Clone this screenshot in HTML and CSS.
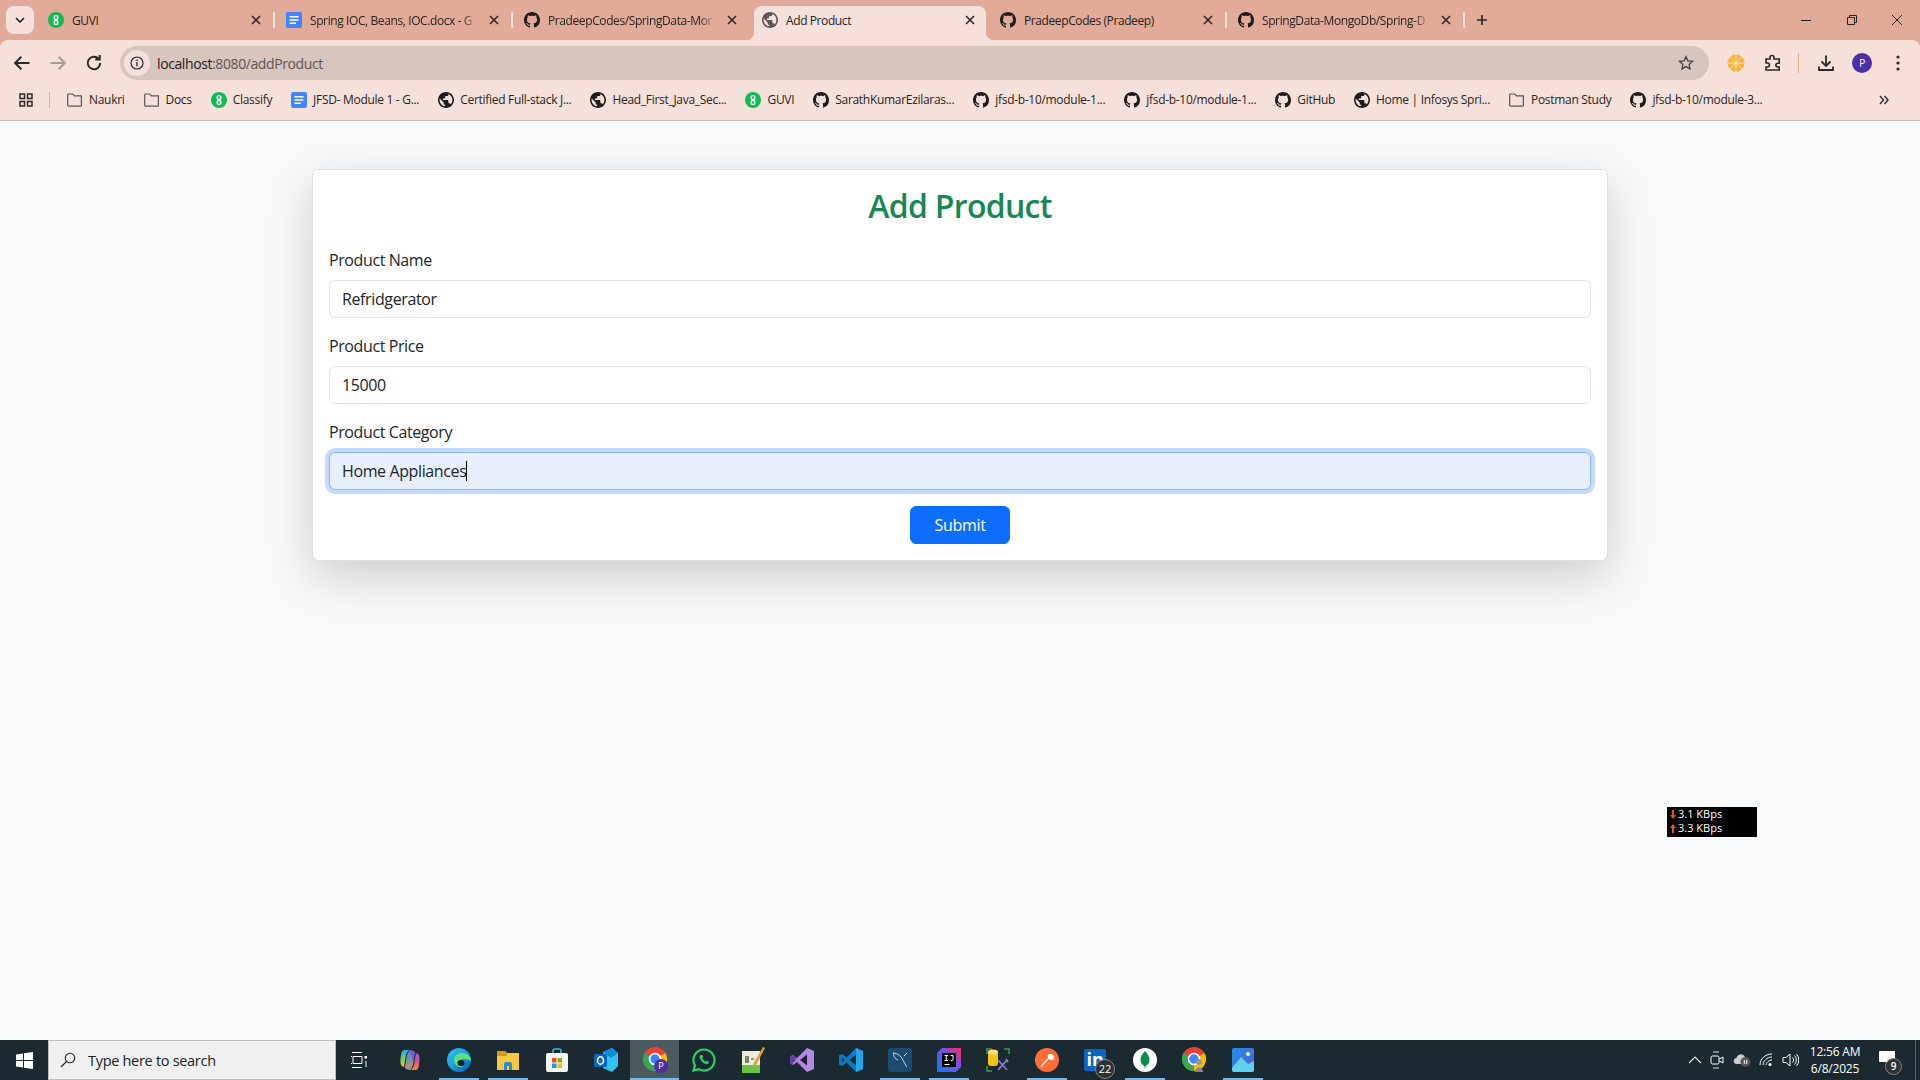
FILE: index.html
```html
<!DOCTYPE html>
<html lang="en">
<head>
    <meta charset="UTF-8">
    <title>Add Product</title>
    <link rel="stylesheet" href="styles.css">
</head>
<body>
    <!-- shared icons -->
    <svg class="sprite" aria-hidden="true">
        <symbol id="gh" viewBox="0 0 16 16"><path d="M8 0C3.58 0 0 3.58 0 8c0 3.54 2.29 6.53 5.47 7.59.4.07.55-.17.55-.38 0-.19-.01-.82-.01-1.49-2.01.37-2.53-.49-2.69-.94-.09-.23-.48-.94-.82-1.13-.28-.15-.68-.52-.01-.53.63-.01 1.08.58 1.23.82.72 1.21 1.87.87 2.33.66.07-.52.28-.87.51-1.07-1.78-.2-3.64-.89-3.64-3.95 0-.87.31-1.59.82-2.15-.08-.2-.36-1.02.08-2.12 0 0 .67-.21 2.2.82.64-.18 1.32-.27 2-.27.68 0 1.36.09 2 .27 1.53-1.04 2.2-.82 2.2-.82.44 1.1.16 1.92.08 2.12.51.56.82 1.27.82 2.15 0 3.07-1.87 3.75-3.65 3.95.29.25.54.73.54 1.48 0 1.07-.01 1.93-.01 2.2 0 .21.15.46.55.38A8.013 8.013 0 0016 8c0-4.42-3.58-8-8-8z"/></symbol>
        <symbol id="globe" viewBox="2 2 20 20"><path d="M12 2C6.48 2 2 6.48 2 12s4.48 10 10 10 10-4.48 10-10S17.52 2 12 2zm-1 17.93c-3.95-.49-7-3.85-7-7.93 0-.62.08-1.21.21-1.79L9 15v1c0 1.1.9 2 2 2v1.93zm6.9-2.54c-.26-.81-1-1.39-1.9-1.39h-1v-3c0-.55-.45-1-1-1H8v-2h2c.55 0 1-.45 1-1V7h2c1.1 0 2-.9 2-2v-.41c2.93 1.19 5 4.06 5 7.41 0 2.08-.8 3.97-2.1 5.39z"/></symbol>
        <symbol id="guvi" viewBox="0 0 16 16"><circle cx="8" cy="8" r="8" fill="#12b954"/><g fill="none" stroke="#fff" stroke-width="1.3"><circle cx="8" cy="5.6" r="1.9"/><circle cx="8" cy="10.4" r="1.9"/></g></symbol>
        <symbol id="doc" viewBox="0 0 16 16"><rect width="16" height="16" rx="2" fill="#4285f4"/><path d="M3.5 4h9v1.6h-9zM3.5 7.2h9v1.6h-9zM3.5 10.4h6.5V12H3.5z" fill="#fff"/></symbol>
        <symbol id="folder" viewBox="0 0 16 14"><path d="M1.6 1h4.2l1.6 1.8h7v9.4a.9.9 0 0 1-.9.9H1.6a.9.9 0 0 1-.9-.9V1.9a.9.9 0 0 1 .9-.9z" fill="none" stroke="#555" stroke-width="1.2"/></symbol>
        <symbol id="cross" viewBox="0 0 10 10"><path d="M1 1l8 8M9 1L1 9" fill="none" stroke="#2a2220" stroke-width="1.5"/></symbol>
    </svg>

    <!-- Browser chrome -->
    <header class="chrome">
        <div class="tabstrip">
            <div class="tab-menu"><svg width="10" height="6" viewBox="0 0 10 6"><path d="M1 1l4 4 4-4" fill="none" stroke="#222" stroke-width="1.6"/></svg></div>
            <div class="tab tab-sep">
                <svg class="ico"><use href="#guvi"/></svg>
                <span class="tab-title">GUVI</span>
                <svg class="tab-close"><use href="#cross"/></svg>
            </div>
            <div class="tab tab-sep">
                <svg class="ico"><use href="#doc"/></svg>
                <span class="tab-title tab-fade">Spring IOC, Beans, IOC.docx - G</span>
                <svg class="tab-close"><use href="#cross"/></svg>
            </div>
            <div class="tab">
                <svg class="ico"><use href="#gh"/></svg>
                <span class="tab-title tab-fade">PradeepCodes/SpringData-Mor</span>
                <svg class="tab-close"><use href="#cross"/></svg>
            </div>
            <div class="tab tab-active">
                <svg class="ico globe-soft"><use href="#globe"/></svg>
                <span class="tab-title">Add Product</span>
                <svg class="tab-close"><use href="#cross"/></svg>
            </div>
            <div class="tab tab-sep">
                <svg class="ico"><use href="#gh"/></svg>
                <span class="tab-title">PradeepCodes (Pradeep)</span>
                <svg class="tab-close"><use href="#cross"/></svg>
            </div>
            <div class="tab tab-sep">
                <svg class="ico"><use href="#gh"/></svg>
                <span class="tab-title tab-fade">SpringData-MongoDb/Spring-D</span>
                <svg class="tab-close"><use href="#cross"/></svg>
            </div>
            <div class="tab-new"><svg width="12" height="12" viewBox="0 0 12 12"><path d="M6 1v10M1 6h10" stroke="#2a2220" stroke-width="1.6"/></svg></div>
            <div class="win-controls">
                <svg width="12" height="12" viewBox="0 0 12 12"><path d="M1 6.5h10" stroke="#2a2220"/></svg>
                <svg width="12" height="12" viewBox="0 0 12 12"><path d="M1.5 3.5h7v7h-7zM3.5 3.5v-2h7v7h-2" fill="none" stroke="#2a2220"/></svg>
                <svg width="12" height="12" viewBox="0 0 12 12"><path d="M1 1l10 10M11 1L1 11" stroke="#2a2220"/></svg>
            </div>
        </div>

        <div class="toolbar">
            <svg class="tool" viewBox="0 0 16 16"><path d="M14 8H3M7.5 3L2.5 8l5 5" fill="none" stroke="#2f2725" stroke-width="1.6"/></svg>
            <svg class="tool" viewBox="0 0 16 16"><path d="M2 8h11M8.5 3l5 5-5 5" fill="none" stroke="#a89a95" stroke-width="1.6"/></svg>
            <svg class="tool" viewBox="0 0 16 16"><path d="M13 8a5 5 0 1 1-1.5-3.6M12.6 1.6v3.6H9" fill="none" stroke="#2f2725" stroke-width="1.6"/></svg>
            <div class="omnibox">
                <span class="site-info"><svg width="14" height="14" viewBox="0 0 14 14"><circle cx="7" cy="7" r="6" fill="none" stroke="#2f2725" stroke-width="1.2"/><path d="M7 6v4.2M7 3.6v1.3" stroke="#2f2725" stroke-width="1.3"/></svg></span>
                <span class="url"><span class="url-host">localhost</span>:8080/addProduct</span>
                <svg class="star" width="16" height="16" viewBox="0 0 16 16"><path d="M8 1.6l1.9 4.2 4.6.5-3.4 3.1.9 4.5-4-2.3-4 2.3.9-4.5-3.4-3.1 4.6-.5z" fill="none" stroke="#4a4340" stroke-width="1.3"/></svg>
            </div>
            <svg class="orange" width="18" height="18" viewBox="0 0 18 18"><circle cx="9" cy="9" r="8.5" fill="#fbb03b"/><g stroke="#fff2c8" stroke-width=".8"><path d="M9 1v16M1 9h16M3.3 3.3l11.4 11.4M14.7 3.3L3.3 14.7"/></g></svg>
            <svg class="ext" width="18" height="18" viewBox="0 0 18 18"><path d="M2 5h4V3.5a2 2 0 0 1 4 0V5h5.2v4.2h-1.4a1.9 1.9 0 0 0 0 3.8h1.4V16H2v-3h1.4a2 2 0 0 0 0-4H2z" fill="none" stroke="#2f2725" stroke-width="1.6"/></svg>
            <span class="tool-sep"></span>
            <svg class="download" width="18" height="18" viewBox="0 0 18 18"><path d="M9 1.5v10M4.5 7.5L9 12l4.500-4.500M2 12.500V16h14v-3.500" fill="none" stroke="#2f2725" stroke-width="1.8"/></svg>
            <span class="avatar">P</span>
            <svg class="dots" width="4" height="16" viewBox="0 0 4 16"><circle cx="2" cy="2" r="1.600"/><circle cx="2" cy="8" r="1.600"/><circle cx="2" cy="14" r="1.600"/></svg>
        </div>

        <div class="bookmarks">
            <svg class="apps" width="14" height="14" viewBox="0 0 14 14"><path d="M1 1h4.500v4.500H1zM8.500 1H13v4.500H8.500zM1 8.500h4.500V13H1zM8.500 8.500H13V13H8.500z" fill="none" stroke="#2f2725" stroke-width="1.500"/></svg>
            <span class="bm-sep"></span>
            <div class="bm"><svg class="ico"><use href="#folder"/></svg><span>Naukri</span></div>
            <div class="bm"><svg class="ico"><use href="#folder"/></svg><span>Docs</span></div>
            <div class="bm"><svg class="ico"><use href="#guvi"/></svg><span>Classify</span></div>
            <div class="bm"><svg class="ico"><use href="#doc"/></svg><span>JFSD- Module 1 - G...</span></div>
            <div class="bm"><svg class="ico"><use href="#globe"/></svg><span>Certified Full-stack J...</span></div>
            <div class="bm"><svg class="ico"><use href="#globe"/></svg><span>Head_First_Java_Sec...</span></div>
            <div class="bm"><svg class="ico"><use href="#guvi"/></svg><span>GUVI</span></div>
            <div class="bm"><svg class="ico"><use href="#gh"/></svg><span>SarathKumarEzilaras...</span></div>
            <div class="bm"><svg class="ico"><use href="#gh"/></svg><span>jfsd-b-10/module-1...</span></div>
            <div class="bm"><svg class="ico"><use href="#gh"/></svg><span>jfsd-b-10/module-1...</span></div>
            <div class="bm"><svg class="ico"><use href="#gh"/></svg><span>GitHub</span></div>
            <div class="bm"><svg class="ico"><use href="#globe"/></svg><span>Home | Infosys Spri...</span></div>
            <div class="bm"><svg class="ico"><use href="#folder"/></svg><span>Postman Study</span></div>
            <div class="bm"><svg class="ico"><use href="#gh"/></svg><span>jfsd-b-10/module-3...</span></div>
            <svg class="bm-more" width="10" height="10" viewBox="0 0 10 10"><path d="M1 1l3.500 4L1 9M5.500 1L9 5 5.500 9" fill="none" stroke="#2f2725" stroke-width="1.400"/></svg>
        </div>
    </header>

    <!-- Page -->
    <main class="page">
        <form class="card">
            <h2 class="card-title">Add Product</h2>
            <div class="form-row">
                <label class="form-label">Product Name</label>
                <div class="form-control">Refridgerator</div>
            </div>
            <div class="form-row">
                <label class="form-label">Product Price</label>
                <div class="form-control">15000</div>
            </div>
            <div class="form-row">
                <label class="form-label">Product Category</label>
                <div class="form-control focused">Home Appliances<span class="caret"></span></div>
            </div>
            <div class="form-actions">
                <button type="button" class="btn-submit">Submit</button>
            </div>
        </form>
        <div class="net-meter">
            <div class="net-row"><svg width="6" height="9" viewBox="0 0 6 9"><path d="M2 0h2v5h2L3 9 0 5h2z" fill="#e8501a"/></svg>3.1 KBps</div>
            <div class="net-row"><svg width="6" height="9" viewBox="0 0 6 9"><path d="M2 9h2V4h2L3 0 0 4h2z" fill="#e8501a"/></svg>3.3 KBps</div>
        </div>
    </main>

    <!-- Windows taskbar -->
    <footer class="taskbar">
        <div class="start"><svg width="17" height="17" viewBox="0 0 17 17"><path d="M0 2.500l7-1v6.500H0zM8 1.300L17 0v8H8zM0 9h7v6.500l-7-1zM8 9h9v8l-9-1.300z" fill="#fff"/></svg></div>
        <div class="search">
            <svg width="16" height="16" viewBox="0 0 16 16"><circle cx="10" cy="6" r="4.700" fill="none" stroke="#222" stroke-width="1.100"/><path d="M6.600 9.400L1 15" stroke="#222" stroke-width="1.200"/></svg>
            <span>Type here to search</span>
        </div>
        <div class="task task-view"><svg width="16" height="16" viewBox="0 0 16 16"><path d="M1 .5h10M1 15.500h10M2 4.500h9v7H2zM0 4.500h1M0 11.500h1" fill="none" stroke="#fff"/><path d="M13.500 4h2.500v2.500h-2.500z" fill="#fff"/><path d="M15 9v6" stroke="#fff"/></svg></div>
        <div class="task"><svg width="24" height="22" viewBox="0 0 24 22"><defs><linearGradient id="cp" x1="0" y1="0" x2="0" y2="1"><stop offset="0" stop-color="#2b9fe8"/><stop offset=".5" stop-color="#6fcf6a"/><stop offset="1" stop-color="#f6c52a"/></linearGradient><linearGradient id="cp2" x1="0" y1="0" x2="0" y2="1"><stop offset="0" stop-color="#9a5fe0"/><stop offset=".5" stop-color="#e64a9a"/><stop offset="1" stop-color="#f58a2c"/></linearGradient></defs><path d="M6 1h6c-3 1-4 4-4.500 8-.4 3-.8 6-2 9-2-.5-3-2.500-3-5 0-5 .5-12 3.500-12z" fill="url(#cp)"/><path d="M18 21h-6c3-1 4-4 4.500-8 .4-3 .8-6 2-9 2 .5 3 2.500 3 5 0 5-.5 12-3.500 12z" fill="url(#cp2)"/><path d="M12 1c2.500 0 4.500 1 5.500 3-1.500 3-1.500 6-2 9-.5 3-1.500 6-3.500 8-2.500 0-4.500-1-5.500-3 1.500-3 1.500-6 2-9 .5-3 1.500-6 3.500-8z" fill="#7a55d8"/><path d="M12 1c-2 2-3 5-3.500 8-.5 3-.5 6-2 9 1 2 3 3 5.500 3 2-2 3-5 3.500-8z" fill="url(#cp)" opacity=".55"/></svg></div>
        <div class="task running"><svg width="24" height="24" viewBox="0 0 24 24"><defs><linearGradient id="edge" x1="0" y1="0" x2="1" y2="1"><stop offset="0" stop-color="#35c1f1"/><stop offset=".5" stop-color="#1b9de2"/><stop offset="1" stop-color="#0c59a4"/></linearGradient></defs><circle cx="12" cy="12" r="12" fill="url(#edge)"/><path d="M24 13c0-5-4-8-9-8-5 0-8 3-8 7 0 5 5 8 9 7-3-1-4-3-4-5 0-2 2-3 5-3 3 0 5 1 7 2z" fill="#5fe07e"/><ellipse cx="14" cy="15" rx="3.500" ry="3" fill="#14202a"/></svg></div>
        <div class="task running"><svg width="22" height="22" viewBox="0 0 22 22"><path d="M0 2h8l2 2h12v17H0z" fill="#f6c843"/><path d="M0 2h8l2 2v3H0z" fill="#d99c18"/><path d="M7 21v-6a2 2 0 0 1 2-2h4a2 2 0 0 1 2 2v6h-3v-4h-2v4z" fill="#2b8ad6"/></svg></div>
        <div class="task"><svg width="22" height="24" viewBox="0 0 22 24"><path d="M7 6V3a2 2 0 0 1 2-2h4a2 2 0 0 1 2 2v3" fill="none" stroke="#35b4ea" stroke-width="1.600"/><rect y="5" width="22" height="19" rx="2" fill="#f5f5f5"/><path d="M6 10h4.500v4.500H6z" fill="#f25022"/><path d="M11.500 10H16v4.500h-4.500z" fill="#7fba00"/><path d="M6 15.500h4.500V20H6z" fill="#00a4ef"/><path d="M11.500 15.500H16V20h-4.500z" fill="#ffb900"/></svg></div>
        <div class="task"><svg width="24" height="24" viewBox="0 0 24 24"><path d="M9 4l9-4 6 5v13l-6 6-9-4z" fill="#30c4f0"/><path d="M9 4l9-4 6 5-7 5z" fill="#0f8bd8"/><rect y="6" width="13" height="13" rx="1.500" fill="#0a64c0"/><ellipse cx="6.500" cy="12.500" rx="3" ry="3.700" fill="none" stroke="#fff" stroke-width="1.600"/></svg></div>
        <div class="task active"><svg class="chrome-ico" width="26" height="26" viewBox="0 0 26 26"><circle cx="12" cy="12" r="12" fill="#ea4335"/><path d="M12 12L22.400 6A12 12 0 0 1 12 24z" fill="#fbbc04"/><path d="M12 12L12 24A12 12 0 0 1 1.600 6z" fill="#34a853"/><circle cx="12" cy="12" r="5.500" fill="#4285f4" stroke="#fff" stroke-width="1.600"/><circle cx="18" cy="19" r="7" fill="#4d2ea6"/><text x="18" y="22" class="chrome-p">P</text></svg></div>
        <div class="task"><svg width="24" height="24" viewBox="0 0 24 24"><path d="M12 1.500A10.500 10.500 0 0 0 3 17.400L1.500 22.500l5.300-1.400A10.500 10.500 0 1 0 12 1.500z" fill="none" stroke="#25d366" stroke-width="2.200"/><path d="M8.500 7c-1 .8-1.300 2-.7 3.500a10 10 0 0 0 5.500 5.500c1.500.6 2.800.2 3.500-.9l.2-1.200-2.300-1.200-1 1.100a7 7 0 0 1-3.500-3.500l1-1L10.200 7z" fill="#25d366"/></svg></div>
        <div class="task"><svg width="24" height="26" viewBox="0 0 24 26"><path d="M1 4h18v22H1z" fill="#e8efd8"/><path d="M1 18h18v8H1z" fill="#6ec24a"/><path d="M5 9v7M7 9v7M10 12h3" stroke="#333" stroke-width="1.200"/><path d="M22 0l2 1-9 17-3 2 .5-3.500z" fill="#e0a030"/></svg></div>
        <div class="task"><svg width="24" height="24" viewBox="0 0 24 24"><path d="M17 0l7 3v18l-7 3-10-10-4 3-3-1.500v-7L3 7l4 3z" fill="#b388e0"/><path d="M17 6.500v11L10 12z" fill="#2b1a40"/><path d="M3 9.500v5l2.500-2.500z" fill="#2b1a40"/><path d="M0 8.500L3 7l4 3-4 3v4l-3-1.500z" fill="#68409e"/></svg></div>
        <div class="task"><svg width="24" height="24" viewBox="0 0 24 24"><path d="M17 0l7 3v18l-7 3L7.500 14.500 3 18l-3-1.500v-9L3 6l4.500 3.500z" fill="#0a7cc4"/><path d="M17 0l7 3v18l-7 3z" fill="#22a6ee"/><path d="M17 6.500L10.500 12l6.500 5.500z" fill="#1a2a30"/><path d="M3 9.500v5L5.500 12z" fill="#1a2a30"/></svg></div>
        <div class="task running"><svg width="24" height="24" viewBox="0 0 24 24"><rect width="24" height="24" rx="3" fill="#1d4a70"/><path d="M5 5c5 0 9 4 11 9 1 2 2 4 3 5M6 5c-1 3 1 6 4 7M19 5l-3 3" fill="none" stroke="#c8dbe8" stroke-width="1"/></svg></div>
        <div class="task running"><svg width="24" height="24" viewBox="0 0 24 24"><defs><linearGradient id="ij" x1="0" y1="1" x2="1" y2="0"><stop offset="0" stop-color="#087cfa"/><stop offset=".6" stop-color="#7a50e0"/><stop offset="1" stop-color="#fe2857"/></linearGradient></defs><path d="M5 0h19v19l-5 5H0V5z" fill="url(#ij)"/><rect x="5" y="5" width="14" height="14" fill="#000"/><path d="M7.500 7.500h3.500M9.250 7.500v5M7.500 12.500h3.500M13.500 7.500h2.500v4a1.300 1.300 0 0 1-2.500.5M7.500 16.500h5" fill="none" stroke="#fff" stroke-width="1"/></svg></div>
        <div class="task"><svg width="24" height="24" viewBox="0 0 24 24"><path d="M1 6V1h5M18 1h5v5M1 18v5h5" fill="none" stroke="#3f9b4f" stroke-width="1.500"/><rect x="2" y="2" width="10" height="16" rx="3" fill="#f2c416"/><ellipse cx="7" cy="4" rx="5" ry="2.500" fill="#f7e27a"/><path d="M12 12l9 10M21 12l-9 10M20 11l2 3" stroke="#8f7fd0" stroke-width="1.700"/></svg></div>
        <div class="task running"><svg width="24" height="24" viewBox="0 0 24 24"><circle cx="12" cy="12" r="12" fill="#ff6c37"/><path d="M7 17l8-8M14 7a3 3 0 0 1 4 4l-2 .5-2.500-2.500zM6 18.500l1.500-1" stroke="#fff" stroke-width="1.500" fill="#fff"/></svg></div>
        <div class="task"><span class="linkedin">in</span><span class="count-badge">22</span></div>
        <div class="task running"><svg width="24" height="24" viewBox="0 0 24 24"><circle cx="12" cy="12" r="12" fill="#fff"/><path d="M12 3c3 3 4.500 6 4.500 9 0 3-2 5-3.800 6L12 21l-.7-3c-1.800-1-3.800-3-3.800-6 0-3 1.500-6 4.500-9z" fill="#0e8a4a"/></svg></div>
        <div class="task"><svg class="chrome-ico" width="26" height="26" viewBox="0 0 26 26"><circle cx="12" cy="12" r="12" fill="#ea4335"/><path d="M12 12L22.400 6A12 12 0 0 1 12 24z" fill="#fbbc04"/><path d="M12 12L12 24A12 12 0 0 1 1.600 6z" fill="#34a853"/><circle cx="12" cy="12" r="5.500" fill="#4285f4" stroke="#fff" stroke-width="1.600"/><circle cx="17" cy="15" r="3" fill="#999"/><path d="M13 25c0-6 8-6 8 0z" fill="#888"/></svg></div>
        <div class="task running"><svg width="22" height="24" viewBox="0 0 22 24"><defs><linearGradient id="ph" x1="0" y1="0" x2="1" y2="1"><stop offset="0" stop-color="#1f8fe8"/><stop offset="1" stop-color="#5c5ad0"/></linearGradient></defs><rect width="22" height="24" rx="2" fill="url(#ph)"/><circle cx="16" cy="6" r="2" fill="#dff"/><path d="M0 20L9 9l7 7 6-3v9a2 2 0 0 1-2 2H2a2 2 0 0 1-2-2z" fill="#5ed0f0"/></svg></div>

        <div class="tray">
            <svg width="14" height="8" viewBox="0 0 14 8"><path d="M1 7l6-6 6 6" fill="none" stroke="#fff" stroke-width="1.100"/></svg>
            <svg width="14" height="18" viewBox="0 0 14 18"><path d="M3 1h6M3 17h6" stroke="#ddd"/><rect x="1" y="5" width="8" height="8" rx="1.500" fill="none" stroke="#fff"/><path d="M9.500 8L13 6v6L9.500 10" fill="none" stroke="#fff"/></svg>
            <svg class="tray-cloud" width="18" height="14" viewBox="0 0 18 14"><path d="M4 11a3 3 0 0 1-.5-6A4.500 4.500 0 0 1 12 4a3 3 0 0 1 3 3v4z" fill="#c9cdcf"/><circle cx="12.500" cy="9" r="5" fill="#555"/><path d="M11.300 7v4M13.700 7v4" stroke="#fff"/></svg>
            <svg width="16" height="14" viewBox="0 0 16 14"><path d="M1 12C1 6 6 1 13 1M4 12c0-4 4-8 9-8M7 12c0-2 3-5 6-5" fill="none" stroke="#fff" stroke-width="1"/><circle cx="11" cy="11.500" r="1.500" fill="#fff"/></svg>
            <svg width="17" height="14" viewBox="0 0 17 14"><path d="M1 4.500h3L8 1v12L4 9.500H1z" fill="none" stroke="#fff"/><path d="M10.500 4.500a3.500 3.500 0 0 1 0 5M12.500 2.500a6.500 6.500 0 0 1 0 9M14.500 1a9 9 0 0 1 0 12" fill="none" stroke="#fff"/></svg>
        </div>
        <div class="clock"><span>12:56 AM</span><span>6/8/2025</span></div>
        <div class="notify">
            <svg width="16" height="15" viewBox="0 0 16 15"><path d="M0 0h16v11h-6l-3 4v-4H0z" fill="#fff"/></svg>
            <span class="notify-badge">9</span>
        </div>
    </footer>
</body>
</html>
```

FILE: styles.css
```css
* {
    margin: 0;
    padding: 0;
    box-sizing: border-box;
}

html, body {
    height: 100%;
    overflow: hidden;
}

body {
    font-family: "Open Sans", "Noto Sans", sans-serif;
    display: flex;
    flex-direction: column;
    background-color: #f8f9fa;
    color: #212529;
}

.sprite {
    position: absolute;
    width: 0;
    height: 0;
}

.ico {
    width: 16px;
    height: 16px;
    flex: none;
    fill: #1f1b1a;
}

/* Browser chrome */
.chrome {
    flex: none;
    height: 121px;
    background-color: #e2aa98;
    font-size: 12px;
    letter-spacing: -0.4px;
    color: #2a2220;
}

.tabstrip {
    display: flex;
    height: 40px;
    padding: 6px 0 0 6px;
}

.tab-menu {
    width: 28px;
    height: 28px;
    border-radius: 8px;
    background-color: #f5e1da;
    display: flex;
    align-items: center;
    justify-content: center;
}

.tab {
    position: relative;
    width: 238px;
    height: 34px;
    padding: 0 8px 6px 14px;
    display: flex;
    align-items: center;
    gap: 8px;
}

.tab-title {
    flex: 1;
    white-space: nowrap;
}

.tab-fade {
    -webkit-mask-image: linear-gradient(to right, #000 calc(100% - 16px), transparent);
    mask-image: linear-gradient(to right, #000 calc(100% - 16px), transparent);
}

.tab-close {
    width: 10px;
    height: 10px;
    margin: 0 3px;
    flex: none;
}

.tab-sep::after {
    content: "";
    position: absolute;
    right: -3px;
    top: 6px;
    width: 2px;
    height: 16px;
    background-color: #f5e1da;
}

.tab-active {
    width: 232px;
    margin-left: 6px;
    padding-left: 8px;
    padding-right: 8px;
    background-color: #f5e1da;
    border-radius: 8px 8px 0 0;
}

.tab-active::before,
.tab-active::after {
    content: "";
    position: absolute;
    bottom: 0;
    width: 8px;
    height: 8px;
}

.tab-active::before {
    left: -8px;
    background: radial-gradient(circle at 0 0, transparent 8px, #f5e1da 8.5px);
}

.tab-active::after {
    right: -8px;
    background: radial-gradient(circle at 100% 0, transparent 8px, #f5e1da 8.5px);
}

.globe-soft {
    fill: #5b5755;
}

.tab-new {
    width: 36px;
    height: 28px;
    margin-left: 2px;
    display: flex;
    align-items: center;
    justify-content: center;
}

.win-controls {
    margin-left: auto;
    width: 138px;
    height: 28px;
    padding: 0 17px 0 18px;
    display: flex;
    align-items: center;
    justify-content: space-between;
}

.toolbar {
    height: 46px;
    padding: 6px 16px 0 12px;
    display: flex;
    align-items: flex-start;
    background-color: #f5e1da;
    border-radius: 8px 8px 0 0;
}

.tool {
    width: 20px;
    height: 20px;
    margin: 7px 16px 0 0;
    flex: none;
}

.omnibox {
    width: 1589px;
    height: 34px;
    padding: 0 10px 0 4px;
    display: flex;
    align-items: center;
    background-color: #d6c6be;
    border-radius: 17px;
    font-size: 14px;
}

.site-info {
    width: 26px;
    height: 26px;
    border-radius: 50%;
    background-color: #f5e1da;
    display: flex;
    align-items: center;
    justify-content: center;
    flex: none;
}

.url {
    margin-left: 7px;
    color: #5e5450;
}

.url-host {
    color: #231d1b;
}

.star {
    margin-left: auto;
    margin-right: 5px;
}

.orange {
    margin: 8px 0 0 18px;
}

.ext {
    margin: 8px 0 0 19px;
}

.tool-sep {
    width: 1px;
    height: 20px;
    margin: 7px 0 0 16px;
    background-color: #e2aa98;
}

.download {
    margin: 8px 0 0 18px;
}

.avatar {
    width: 20px;
    height: 20px;
    margin: 7px 0 0 17px;
    border-radius: 50%;
    background-color: #4d2ea6;
    color: #fff;
    font-size: 10px;
    line-height: 20px;
    text-align: center;
}

.dots {
    margin: 9px 0 0 24px;
    fill: #2f2725;
}

.bookmarks {
    height: 35px;
    padding: 0 0 7px 19px;
    display: flex;
    align-items: center;
    background-color: #f5e1da;
    border-bottom: 1px solid #c4bcb8;
    gap: 19px;
    letter-spacing: -0.3px;
}

.apps {
    flex: none;
}

.bm-sep {
    width: 1px;
    height: 16px;
    margin: 0 -2px 0 -3px;
    background-color: #e2aa98;
}

.bm {
    display: flex;
    align-items: center;
    gap: 6px;
    white-space: nowrap;
}

.bm-more {
    margin-left: auto;
    margin-right: 31px;
}

/* Page */
.page {
    flex: 1;
    min-height: 0;
    padding: 48px 312px 0;
}

.card {
    width: 1296px;
    padding: 16px;
    background-color: #fff;
    border: 1px solid rgba(0, 0, 0, 0.125);
    border-radius: 6px;
    box-shadow: 0 16px 48px rgba(0, 0, 0, 0.175);
}

.card-title {
    font-size: 32px;
    font-weight: 600;
    line-height: 38.4px;
    letter-spacing: -0.7px;
    margin-bottom: 24px;
    padding-top: 1px;
    height: 38.4px;
    text-align: center;
    color: #198754;
}

.form-row {
    margin-bottom: 16px;
}

.form-label {
    display: block;
    font-size: 16px;
    line-height: 24px;
    letter-spacing: -0.4px;
    margin-bottom: 8px;
}

.form-control {
    height: 38px;
    padding: 6px 12px;
    font-size: 16px;
    line-height: 24px;
    letter-spacing: -0.38px;
    border: 1px solid #dee2e6;
    border-radius: 6px;
    background-color: #fff;
}

.form-control.focused {
    background-color: #e8f0fe;
    border-color: #86b7fe;
    box-shadow: 0 0 0 4px rgba(13, 110, 253, 0.25);
}

.caret {
    display: inline-block;
    width: 1px;
    height: 20px;
    vertical-align: -4px;
    background-color: #000;
}

.form-actions {
    text-align: center;
}

.btn-submit {
    height: 38px;
    width: 100px;
    border: 1px solid #0d6efd;
    border-radius: 6px;
    background-color: #0d6efd;
    color: #fff;
    font-family: inherit;
    font-size: 16px;
    line-height: 24px;
    letter-spacing: -0.3px;
}

.net-meter {
    position: absolute;
    left: 1667px;
    top: 807px;
    width: 90px;
    height: 30px;
    padding-left: 3px;
    background-color: #000;
    color: #fff;
    font-size: 11px;
    line-height: 14px;
}

.net-row {
    display: flex;
    align-items: center;
    gap: 2px;
}

/* Windows taskbar */
.taskbar {
    flex: none;
    height: 40px;
    display: flex;
    background-color: #1a2a30;
    color: #fff;
}

.start {
    width: 48px;
    display: flex;
    align-items: center;
    justify-content: center;
}

.search {
    width: 288px;
    padding-left: 11px;
    display: flex;
    align-items: center;
    gap: 12px;
    background-color: #f0f0f0;
    border: 1px solid #bdbdbd;
    color: #222;
    font-size: 14.5px;
    letter-spacing: -0.3px;
}

.task {
    position: relative;
    width: 49px;
    display: flex;
    align-items: center;
    justify-content: center;
}

.task-view svg {
    margin-right: 4px;
}

.task.running::after,
.task.active::after {
    content: "";
    position: absolute;
    bottom: 0;
    left: 4.5px;
    width: 40px;
    height: 2px;
    background-color: #76b9ed;
}

.task.active {
    background-color: #4a5a5e;
}

.task.active::after {
    left: 0;
    width: 100%;
}

.chrome-ico {
    margin-left: 3px;
}

.chrome-p {
    font-size: 9px;
    fill: #fff;
    text-anchor: middle;
}

.linkedin {
    width: 22px;
    height: 22px;
    margin-right: 2px;
    border-radius: 2px;
    background-color: #0a66c2;
    color: #fff;
    font-size: 18px;
    font-weight: 700;
    line-height: 20px;
    padding-left: 3px;
}

.count-badge {
    position: absolute;
    left: 24px;
    top: 19px;
    width: 20px;
    height: 20px;
    border: 1px solid #888;
    border-radius: 50%;
    background-color: #2a3236;
    font-size: 11px;
    line-height: 18px;
    text-align: center;
}

.tray {
    margin-left: auto;
    width: 111px;
    display: flex;
    align-items: center;
    justify-content: space-between;
}

.tray-cloud {
    margin-left: 2px;
}

.clock {
    width: 78px;
    margin-left: -3px;
    display: flex;
    flex-direction: column;
    align-items: center;
    justify-content: center;
    font-size: 12px;
    line-height: 17px;
    letter-spacing: -0.2px;
}

.notify {
    position: relative;
    width: 42px;
    margin-right: 4px;
    display: flex;
    align-items: center;
    justify-content: center;
    border-right: 1px solid #5a686d;
}

.notify svg {
    margin: 0 0 3px -16px;
}

.notify-badge {
    position: absolute;
    left: 11px;
    top: 18px;
    width: 17px;
    height: 17px;
    border: 1px solid #888;
    border-radius: 50%;
    background-color: #2a3236;
    font-size: 10px;
    font-weight: 600;
    line-height: 15px;
    text-align: center;
}
```
